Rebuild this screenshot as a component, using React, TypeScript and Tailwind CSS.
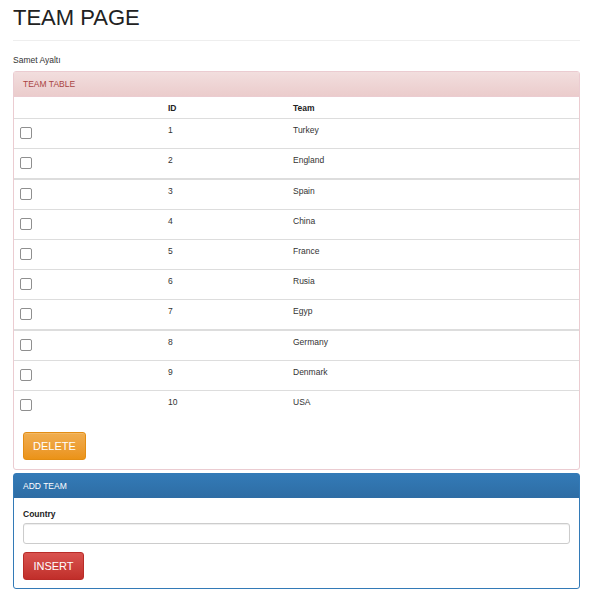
import React from "react";

const teams = [
  { id: 1, name: "Turkey", thick: false },
  { id: 2, name: "England", thick: false },
  { id: 3, name: "Spain", thick: true },
  { id: 4, name: "China", thick: false },
  { id: 5, name: "France", thick: false },
  { id: 6, name: "Rusia", thick: false },
  { id: 7, name: "Egyp", thick: false },
  { id: 8, name: "Germany", thick: true },
  { id: 9, name: "Denmark", thick: false },
  { id: 10, name: "USA", thick: false },
];

function Box() {
  return (
    <span className="mt-[4px] block h-[12px] w-[12px] rounded-[2px] border border-[#8f8f8f] bg-white" />
  );
}

export default function App() {
  return (
    <div
      className="w-[590px] bg-white pl-[13px] pr-[10px] text-[#333]"
      style={{ fontFamily: '"Liberation Sans", Arial, sans-serif' }}
    >
      <h1 className="pt-[6px] text-[22px] leading-[24px] text-[#222]">TEAM PAGE</h1>
      <div className="mt-[10px] border-t border-[#eee]" />
      <div className="mt-[13px] text-[8.5px] leading-[12px]">Samet Ayaltı</div>
      <div className="mt-[5px] rounded-[3px] border border-[#ebccd1] bg-white">
        <div className="h-[24px] bg-gradient-to-b from-[#f2dede] to-[#ebcccc] px-[9px] text-[8.5px] leading-[24px] text-[#a94442]">
          TEAM TABLE
        </div>
        <div className="flex h-[22px] border-t border-[#ebccd1] text-[8.5px] font-bold leading-[12px] text-[#222]">
          <div className="w-[148px]" />
          <div className="w-[125px] pt-[5px] pl-[6px]">ID</div>
          <div className="pt-[5px] pl-[6px]">Team</div>
        </div>
        {teams.map((t) => (
          <div
            key={t.id}
            className={
              t.thick
                ? "flex h-[31px] border-t-2 border-[#ddd] text-[8.5px] leading-[12px]"
                : "flex h-[30px] border-t border-[#ddd] text-[8.5px] leading-[12px]"
            }
          >
            <div className="w-[148px] pl-[6px] pt-[4px]">
              <Box />
            </div>
            <div className="w-[125px] pl-[6px] pt-[5px]">{t.id}</div>
            <div className="pl-[6px] pt-[5px]">{t.name}</div>
          </div>
        ))}
        <div className="px-[9px] pt-[12px] pb-[9px]">
          <button className="h-[28px] w-[63px] rounded-[3px] border border-[#e38d13] bg-gradient-to-b from-[#f0ad4e] to-[#eb9316] text-[11px] text-white shadow-[inset_0_1px_0_rgba(255,255,255,0.15)]">
            DELETE
          </button>
        </div>
      </div>
      <div className="mt-[3px] rounded-[3px] border border-[#337ab7] bg-white">
        <div className="h-[24px] bg-gradient-to-b from-[#337ab7] to-[#2e6da4] px-[9px] text-[8.5px] leading-[24px] text-white">
          ADD TEAM
        </div>
        <div className="px-[9px] pt-[10px] pb-[8px]">
          <div className="text-[8.5px] font-bold leading-[12px] text-[#222]">Country</div>
          <div className="mt-[3px] h-[21px] rounded-[3px] border border-[#ccc] bg-white shadow-[inset_0_1px_1px_rgba(0,0,0,0.075)]" />
          <button className="mt-[8px] h-[28px] w-[61px] rounded-[3px] border border-[#b92c28] bg-gradient-to-b from-[#d9534f] to-[#c12e2a] text-[11px] text-white">
            INSERT
          </button>
        </div>
      </div>
    </div>
  );
}
